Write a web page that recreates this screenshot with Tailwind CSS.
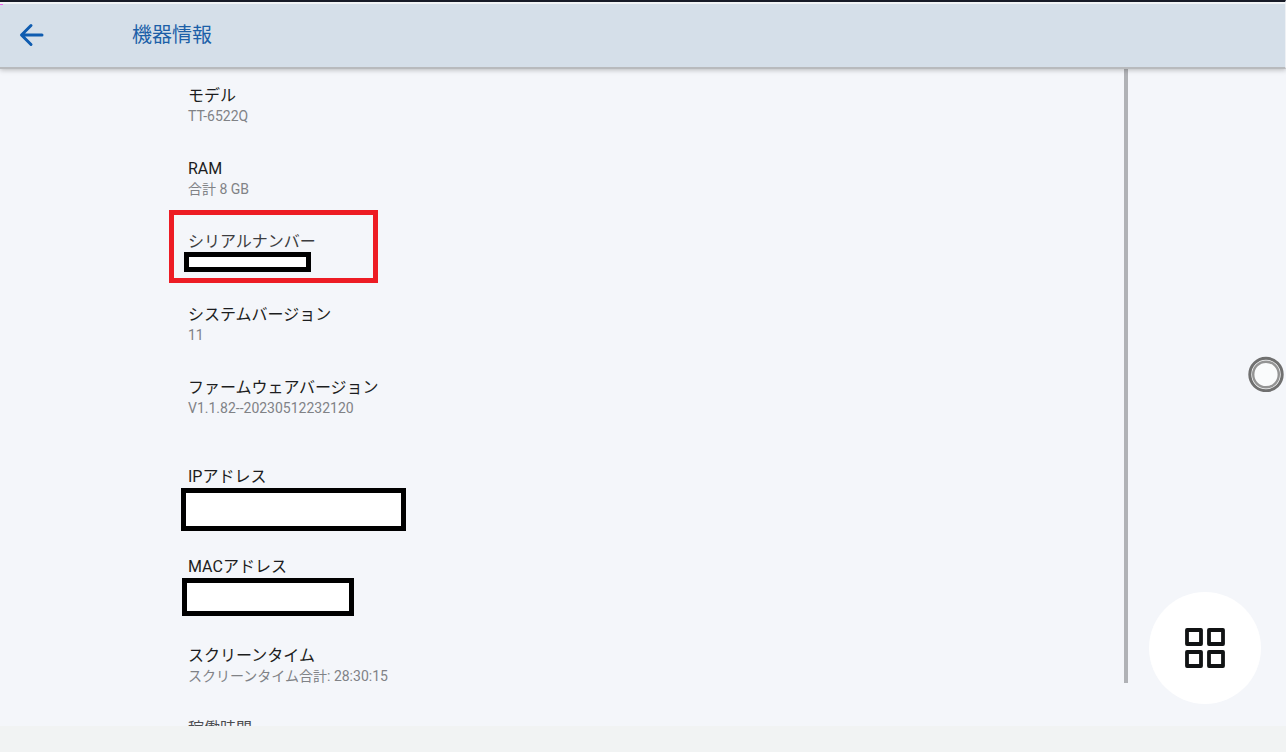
<!DOCTYPE html>
<html lang="ja">
<head>
    <meta charset="UTF-8">
    <meta name="viewport" content="width=device-width, initial-scale=1.0">
    <title>機器情報</title>
    <script src="https://cdn.jsdelivr.net/npm/@tailwindcss/browser@4"></script>
</head>
<body class="relative flex flex-col h-screen overflow-hidden bg-[#f4f6fa] font-[Roboto,'Noto_Sans_CJK_JP',sans-serif] text-[#1c1d20]">
    <!-- Header -->
    <header class="relative z-10 shrink-0 flex items-center h-[69px] pt-px pl-[18px] border-t-2 border-t-[#171b27] border-b-2 border-b-[#b8babd] border-r border-r-[#eef1f5] bg-[#d5dfe9] shadow-[0_1px_5px_rgba(0,0,0,0.25)]">
        <div class="absolute top-0 inset-x-0 h-0.5 bg-[#f1f4f6]"></div>
        <div class="absolute top-0.5 left-0 w-[3px] h-px bg-[#ee66ee]"></div>
        <button type="button" aria-label="戻る" class="w-[26px] h-[26px] text-[#0f5cb0]">
            <svg viewBox="0 0 26 26" class="size-full" fill="none" stroke="currentColor" stroke-width="3" stroke-linecap="round" stroke-linejoin="round">
                <path d="M24 13H4M13 3.5 3.5 13l9.5 9.5"/>
            </svg>
        </button>
        <h1 class="ml-[88px] text-[20px] leading-7 text-[#1c5fa8]">機器情報</h1>
    </header>

    <!-- Device info -->
    <main class="relative flex-1 min-h-0 overflow-hidden pt-[15px] pl-[188px]">
        <dl class="text-sm leading-4 text-[#808286]">
            <div class="h-[73px]">
                <dt class="text-base leading-6 text-[#1c1d20]">モデル</dt>
                <dd>TT-6522Q</dd>
            </div>
            <div class="h-[73px]">
                <dt class="text-base leading-6 text-[#1c1d20]">RAM</dt>
                <dd>合計 8 GB</dd>
            </div>
            <div class="relative h-[73px]">
                <div class="absolute -top-5 -left-[19px] w-[209px] h-[73px] border-5 border-[#ed1c24]"></div>
                <dt class="text-base leading-6 text-[#3c3d40]">シリアルナンバー</dt>
                <dd class="-mt-0.5 -ml-1 w-[127px] h-5 border-5 border-black bg-white"></dd>
            </div>
            <div class="h-[73px]">
                <dt class="text-base leading-6 text-[#1c1d20]">システムバージョン</dt>
                <dd>11</dd>
            </div>
            <div class="h-[89px]">
                <dt class="text-base leading-6 text-[#1c1d20]">ファームウェアバージョン</dt>
                <dd>V1.1.82--20230512232120</dd>
            </div>
            <div class="h-[90px]">
                <dt class="text-base leading-6 text-[#1c1d20]">IPアドレス</dt>
                <dd class="-mt-px -ml-[7px] w-[225px] h-[43px] border-5 border-black bg-white"></dd>
            </div>
            <div class="h-[89px]">
                <dt class="text-base leading-6 text-[#1c1d20]">MACアドレス</dt>
                <dd class="-mt-px -ml-[6px] w-[172px] h-[38px] border-5 border-black bg-white"></dd>
            </div>
            <div class="h-[73px]">
                <dt class="text-base leading-6 text-[#1c1d20]">スクリーンタイム</dt>
                <dd>スクリーンタイム合計: 28:30:15</dd>
            </div>
            <div class="h-[73px]">
                <dt class="text-base leading-6 text-[#4c4d50]">稼働時間</dt>
                <dd></dd>
            </div>
        </dl>

        <!-- Scrollbar -->
        <div class="absolute top-0 bottom-[43px] right-[158px] w-1 bg-[#b0b2b6]"></div>
    </main>

    <footer class="shrink-0 h-[26px] bg-[#f1f3f3]"></footer>

    <!-- Floating buttons -->
    <button type="button" aria-label="アシスト" class="absolute top-[356px] right-[2px] size-9">
        <svg viewBox="0 0 36 36" class="size-full" fill="#fafbfc">
            <circle cx="18" cy="18.5" r="16.2" stroke="#707070" stroke-width="3"/>
            <circle cx="18" cy="18.5" r="12.8" stroke="#949494" stroke-width="2.4"/>
        </svg>
    </button>
    <button type="button" aria-label="メニュー" class="absolute bottom-12 right-[25px] flex items-center justify-center size-28 rounded-full bg-white">
        <svg viewBox="0 0 40 40" class="size-10" fill="none" stroke="#111314" stroke-width="3.8" stroke-linejoin="round">
            <path d="M2 2h14v14H2zM24 2h14v14H24zM2 24h14v14H2zM24 24h14v14H24z"/>
        </svg>
    </button>
</body>
</html>
